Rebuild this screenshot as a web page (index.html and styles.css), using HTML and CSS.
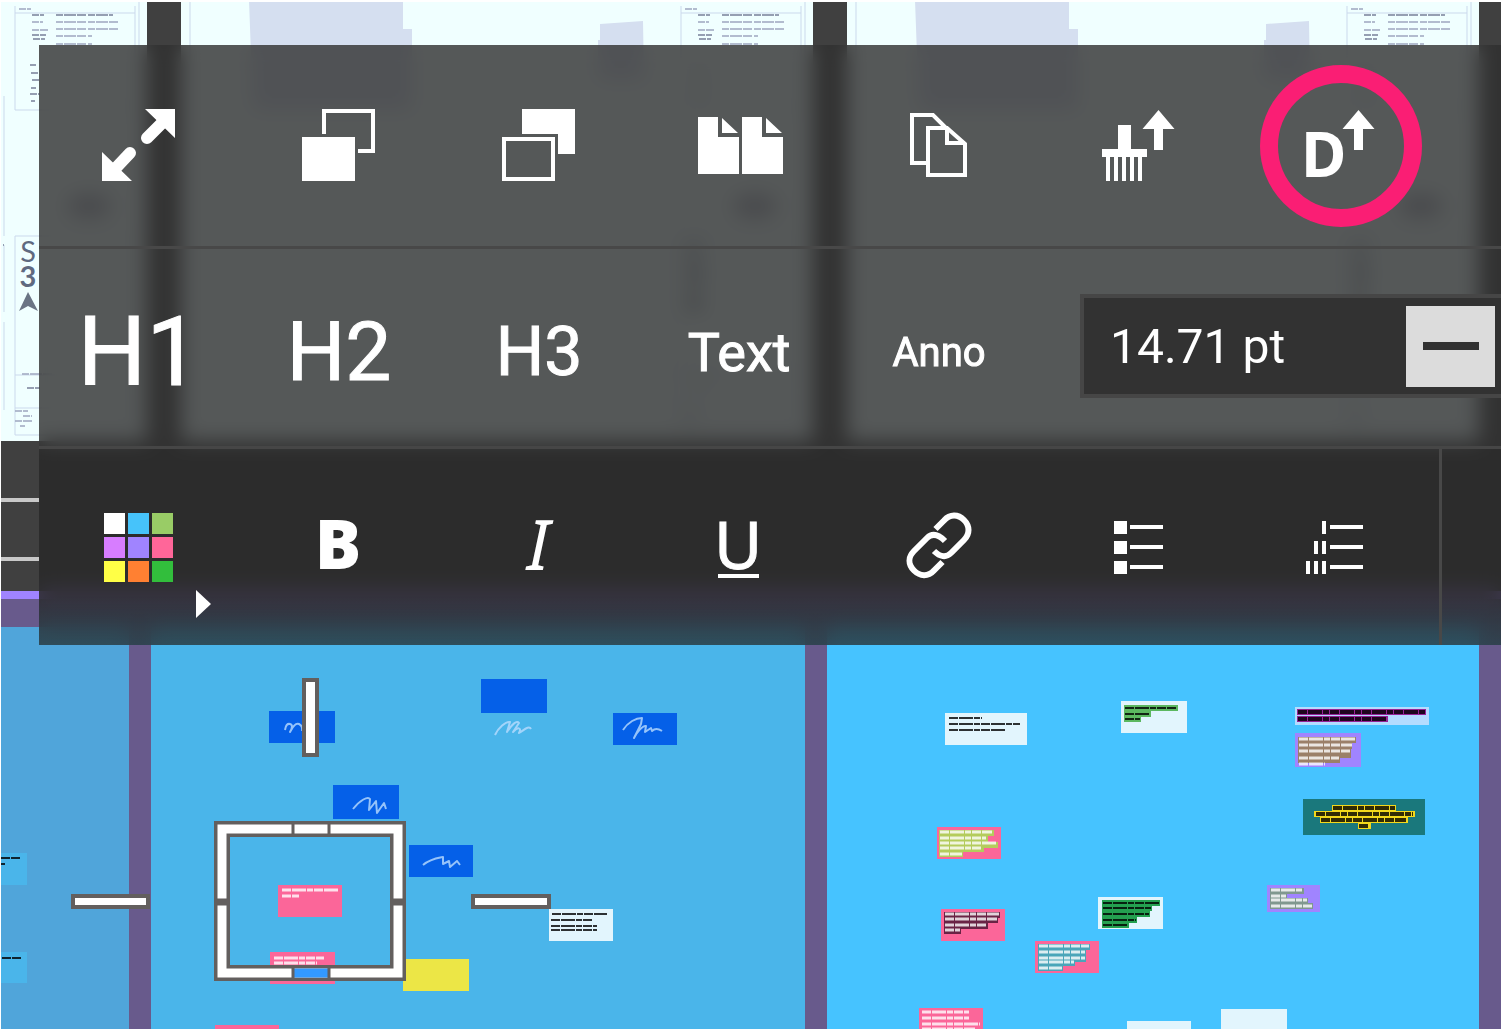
FILE: index.html
```
<!DOCTYPE html>
<html lang="en">
<head>
<meta charset="utf-8">
<meta name="viewport" content="width=device-width, initial-scale=1">
<title>Whiteboard</title>
<link rel="stylesheet" href="styles.css">
</head>
<body>
<main class="board">
  <svg class="canvas" aria-hidden="true">
    <!-- drawing sheets -->
    <rect class="backdrop" width="100%" height="592"/>
    <defs>
      <clipPath id="sheet-clip"><rect x="181" y="0" width="632" height="441"/></clipPath>
      <g id="sheet" clip-path="url(#sheet-clip)">
        <rect class="paper" x="181" y="0" width="632" height="441"/>
        <path class="plan" d="M249 0H403V29H412V110H253ZM600 24L643 21L644 80H598V40H600Z"/>
        <g class="rule">
          <path d="M190 0V441M805 0V441M681 6V110H801V6M681 13H801M681 435V236H801V435H681M681 375H801M681 408H801"/>
          <path d="M670 96V236M670 245V312M670 322V410"/>
        </g>
        <g class="print">
          <path d="M685 9H697M698 22H709M698 30H714M722 22H784M722 29H785M722 36H758M722 44H758M688 374H720M681 411H694M689 416H698M681 421H698M686 426H691"/>
          <path class="print-bold" d="M722 15H779M698 15H710M698 35H712M699 39H711M696 65H702M697 73H705M698 80H705M697 88H702M696 94H706M697 101H701M693 388H706M669 145H669M669 245H670"/>
        </g>
        <ellipse class="ink" cx="755" cy="206" rx="22" ry="12"/>
        <text class="mark" x="694" y="262">S</text>
        <text class="mark mark-bold" x="694" y="287">3</text>
        <path class="north" d="M694 292L704 311L694 306L685 311Z"/>
      </g>
    </defs>
    <use href="#sheet" x="-666"/>
    <use href="#sheet"/>
    <use href="#sheet" x="666"/>
    <rect class="guide" y="498" width="39" height="4"/>
    <rect class="guide" y="557" width="39" height="4"/>

    <!-- note panels -->
    <rect class="panel-edge" y="591" width="100%" height="8"/>
    <rect class="panel-gap" y="599" width="100%" height="100%"/>
    <rect class="panel-a" x="0" y="627" width="129" height="100%"/>
    <rect class="panel-b" x="151" y="627" width="654" height="100%"/>
    <rect class="panel-c" x="827" y="627" width="652" height="100%"/>

    <g class="panel-b">
      <rect x="0" y="853" width="27" height="32"/>
      <rect x="0" y="952" width="27" height="31"/>
    </g>
    <path class="greek" d="M1 858H20M1 864H5M2 958H21"/>

    <g class="note-blue">
      <rect x="269" y="711" width="66" height="32"/>
      <rect x="481" y="679" width="66" height="34"/>
      <rect x="613" y="713" width="64" height="32"/>
      <rect x="333" y="785" width="66" height="34"/>
      <rect x="409" y="845" width="64" height="32"/>
    </g>
    <g class="scribble">
      <path d="M285 730Q286 723 290 724T290 732Q295 722 299 724T302 731"/>
      <path d="M495 735C498 728 506 721 510 722L507 732C512 724 517 720 519 723L513 732C518 727 522 727 519 733C524 730 529 725 531 729"/>
      <path d="M623 730C628 722 636 718 642 718L641 724L634 738C637 732 643 725 646 726L645 732L651 728L652 731Q656 727 662 731"/>
      <path d="M353 809C360 800 368 796 370 799L369 810L376 801L377 813L384 803L386 809"/>
      <path d="M423 865C430 859 438 858 443 857L443 864L449 861L450 867L457 861L460 865"/>
    </g>
    <rect class="note-yellow" x="403" y="959" width="66" height="32"/>
    <g class="note-pink">
      <rect x="278" y="885" width="64" height="32"/>
      <rect x="270" y="952" width="65" height="32"/>
      <rect x="215" y="1025" width="64" height="32"/>
      <rect x="937" y="827" width="64" height="32"/>
      <rect x="941" y="909" width="64" height="32"/>
      <rect x="1035" y="941" width="64" height="32"/>
      <rect x="919" y="1008" width="64" height="32"/>
    </g>
    <g class="note-white">
      <rect x="549" y="909" width="64" height="32"/>
      <rect x="945" y="713" width="82" height="32"/>
      <rect x="1121" y="701" width="66" height="32"/>
      <rect x="1098" y="897" width="65" height="32"/>
      <rect x="1127" y="1021" width="64" height="32"/>
      <rect x="1221" y="1009" width="66" height="32"/>
    </g>
    <g class="note-violet">
      <rect x="1295" y="733" width="66" height="34"/>
      <rect x="1267" y="885" width="53" height="27"/>
    </g>
    <rect class="note-sky" x="1295" y="707" width="134" height="18"/>
    <rect class="note-teal" x="1303" y="799" width="122" height="36"/>

    <g class="highlight">
      <path stroke="#5cb860" d="M1124 708H1178M1124 714H1151M1124 719H1141"/>
      <path stroke="#962296" d="M1297 712H1426M1297 719H1388"/>
      <path stroke="#9b8068" d="M1298 740H1356M1298 746H1352M1298 752H1351M1298 755H1351M1298 760H1340"/>
      <path stroke="#f2d81c" d="M1332 808H1396M1314 814H1415M1320 820H1408M1358 826H1371"/>
      <path stroke="#b4cc5c" d="M939 833H994M939 839H988M939 845H998M939 849H984M939 854H963"/>
      <path stroke="#6a2345" d="M944 915H1000M944 920H998M944 926H988M944 931H961"/>
      <path stroke="#24a050" d="M1102 903H1160M1102 908H1152M1102 914H1150M1102 920H1137M1102 925H1129"/>
      <path stroke="#4aa5b9" d="M1038 947H1090M1038 953H1086M1038 959H1086M1038 963H1075M1038 968H1063"/>
      <path stroke="#80988f" d="M1270 891H1304M1270 896H1287M1270 901H1308M1270 906H1313"/>
    </g>
    <path class="greek" d="M552 914H607M551 920H593M551 926H597M551 930H597M949 718H982M949 724H1020M949 730H1005M1125 708H1176M1125 714H1150M1125 719H1140M1103 903H1159M1103 908H1151M1103 914H1149M1103 920H1136M1103 925H1128"/>
    <path class="greek greek-heavy" d="M1298 712H1425M1298 719H1387M1333 808H1395M1316 814H1413M1321 820H1406M1359 826H1369"/>
    <path class="greek greek-light" d="M282 890H339M282 896H299M274 958H324M274 963H317M1299 739H1355M1299 745H1352M1299 751H1350M1299 758H1339M1299 764H1325M940 832H992M940 838H986M940 843H996M940 848H982M940 854H962M945 914H999M945 919H997M945 925H987M945 930H960M1039 946H1089M1039 952H1085M1039 958H1085M1039 962H1074M1039 968H1062M1271 890H1303M1271 896H1286M1271 900H1307M1271 906H1312M922 1012H969M922 1018H969M922 1024H980M922 1029H975"/>

    <!-- selection frame -->
    <g class="frame-line">
      <rect x="304" y="680" width="13" height="75"/>
      <rect x="73" y="896" width="75" height="11"/>
      <rect x="473" y="896" width="76" height="11"/>
    </g>
    <rect class="frame-outer" x="222" y="829" width="176" height="144"/>
    <rect class="frame-inner" x="222" y="829" width="176" height="144"/>
    <path class="frame-accent" d="M293 973H329"/>
    <path class="frame-split" d="M293 824V835M329 824V835M293 968V979M329 968V979"/>
    <path class="frame-split frame-split-wide" d="M217 902H229M392 902H405"/>
    <path class="margin" d="M0 1H4000M0 0V4000"/>
  </svg>

  <section class="menu" aria-label="Formatting">
    <div class="row row-arrange">
      <button class="tool" aria-label="Expand">
        <svg class="icon" viewBox="0 0 100 100"><path d="M56 14H86V43ZM13 57V86H43Z"/><path class="round" d="M76 25L58 43M24 76L41 58"/></svg>
      </button>
      <button class="tool" aria-label="Bring to front">
        <svg class="icon" viewBox="0 0 100 100"><path d="M13 42H66V86H13Z"/><path class="line" d="M35 39V16H84V56H69"/></svg>
      </button>
      <button class="tool" aria-label="Send to back">
        <svg class="icon" viewBox="0 0 100 100"><path d="M33 14H86V59H69V39H33Z"/><path class="line" d="M15 44H64V84H15Z"/></svg>
      </button>
      <button class="tool" aria-label="Duplicate page">
        <svg class="icon" viewBox="0 0 100 100"><path d="M9 22H29V42H50V79H9ZM33 23V38H49ZM53 22H73V42H94V79H53ZM77 23V38H93Z"/></svg>
      </button>
      <button class="tool" aria-label="Copy">
        <svg class="icon" viewBox="0 0 100 100"><path class="line" d="M38 68H23V20H44L57 33M39 33H58L76 49V80H39ZM58 33V48H76"/></svg>
      </button>
      <button class="tool" aria-label="Pick up format">
        <svg class="icon" viewBox="0 0 100 100"><path d="M29 30H42V54H58V62H13V54H29ZM17 62H21V86H17ZM25 62H29V86H25ZM33 62H37V86H33ZM41 62H45V86H41ZM49 62H53V86H49ZM69.500 15L85.500 34H74V55H65V34H53.500Z"/></svg>
      </button>
      <button class="tool tool-ringed" aria-label="Set as default">
        <svg class="icon" viewBox="0 0 100 100"><text class="glyph glyph-default" x="12" y="82">D</text><path d="M69.500 15L85.500 34H74V55H65V34H53.500Z"/></svg>
      </button>
    </div>
    <div class="row row-text">
      <button class="tool text-h1">H1</button>
      <button class="tool text-h2">H2</button>
      <button class="tool text-h3">H3</button>
      <button class="tool text-body">Text</button>
      <button class="tool text-anno">Anno</button>
      <div class="stepper">
        <input class="stepper-value" type="text" value="14.71 pt" aria-label="Font size">
        <button class="stepper-minus" aria-label="Decrease font size"><span class="dash"></span></button>
      </div>
    </div>
    <div class="row row-format">
      <button class="tool" aria-label="Colors">
        <svg class="icon" viewBox="0 0 100 100">
          <rect fill="#ffffff" x="15" y="16" width="21" height="21"/><rect fill="#46c3fa" x="39" y="16" width="21" height="21"/><rect fill="#99cc66" x="63" y="16" width="21" height="21"/>
          <rect fill="#d77dff" x="15" y="40" width="21" height="21"/><rect fill="#a084ff" x="39" y="40" width="21" height="21"/><rect fill="#ff6699" x="63" y="40" width="21" height="21"/>
          <rect fill="#ffff46" x="15" y="64" width="21" height="21"/><rect fill="#ff8032" x="39" y="64" width="21" height="21"/><rect fill="#32be3c" x="63" y="64" width="21" height="21"/>
          <path d="M107 93L122 107L107 121Z"/>
        </svg>
      </button>
      <button class="tool" aria-label="Bold">
        <svg class="icon" viewBox="0 0 100 100"><text class="glyph glyph-bold" x="49" y="72">B</text></svg>
      </button>
      <button class="tool" aria-label="Italic">
        <svg class="icon" viewBox="0 0 100 100"><text class="glyph glyph-italic" x="49" y="73">I</text></svg>
      </button>
      <button class="tool" aria-label="Underline">
        <svg class="icon" viewBox="0 0 100 100"><text class="glyph glyph-underline" x="49" y="72">U</text><path d="M29 77H70V81H29Z"/></svg>
      </button>
      <button class="tool" aria-label="Link">
        <svg class="icon" viewBox="0 0 100 100"><path class="chain" d="M46.500 32L55 23.500C61 17 69 17 75 23C81 29 81 37 75 43L62 56C57 61 51 60 45 54M53.500 65L45 73.500C39 80 31 79.500 25 73.500C19 67.500 19 60 25 54L38 41C43 36 49 37 56 44"/></svg>
      </button>
      <button class="tool" aria-label="Bulleted list">
        <svg class="icon" viewBox="0 0 100 100"><path d="M25 24H38V37H25ZM25 44H38V57H25ZM25 64H38V77H25ZM41 28H74V32H41ZM41 48H74V52H41ZM41 68H74V72H41Z"/></svg>
      </button>
      <button class="tool" aria-label="Numbered list">
        <svg class="icon" viewBox="0 0 100 100"><path d="M33 24H37V37H33ZM33 44H37V57H33ZM33 64H37V77H33ZM25 44H29V57H25ZM25 64H29V77H25ZM17 64H21V77H17ZM41 28H74V32H41ZM41 48H74V52H41ZM41 68H74V72H41Z"/></svg>
      </button>
      <div class="more"></div>
    </div>
  </section>
</main>
</body>
</html>
```
FILE: styles.css
```
*, *::before, *::after { box-sizing: border-box; }

body {
  margin: 0;
  background: #fff;
  font-family: Roboto, "Liberation Sans", sans-serif;
  color: #fff;
}

.board {
  position: relative;
  min-height: 100vh;
  padding: 45px 0 0 39px;
  overflow: hidden;
}

/* canvas */
.canvas {
  position: absolute;
  inset: 0;
  width: 100%;
  height: 100%;
}
.backdrop { fill: #404040; }
.paper { fill: #f0ffff; }
.plan { fill: #d5dff0; }
.rule { fill: none; stroke: #cbd9ec; stroke-width: 1; }
.print { fill: none; stroke: #a3acc4; stroke-width: 2; stroke-dasharray: 7 1 12 1 9 2; opacity: 0.8; }
.print-bold { stroke: #7f88a0; }
.ink { fill: #b0b6c4; }
.mark { font: 400 29px Lato, sans-serif; fill: #5f6a80; text-anchor: middle; }
.mark-bold { font-weight: 700; }
.north { fill: #6a7484; }
.guide { fill: #c8c8c8; }
.panel-edge { fill: #a084ff; }
.panel-gap { fill: #685a8c; }
.panel-a { fill: #50a5da; }
.panel-b { fill: #4ab5ea; }
.panel-c { fill: #46c3ff; }
.note-blue { fill: #0560e8; }
.note-yellow { fill: #ece646; }
.note-pink { fill: #fb6699; }
.note-white { fill: #e2f5fd; }
.note-violet { fill: #a084ff; }
.note-sky { fill: #b4dcff; }
.note-teal { fill: #1a787c; }
.highlight { fill: none; stroke-width: 6; }
.greek { fill: none; stroke: #000; stroke-width: 2; stroke-dasharray: 9 1 14 1 6 1; opacity: 0.8; }
.greek-heavy { stroke-width: 4; }
.greek-light { stroke: #fff; stroke-width: 3; }
.scribble { fill: none; stroke: #b9dcff; stroke-width: 2; stroke-linejoin: round; opacity: 0.8; }
.frame-line { fill: #fff; stroke: #635f5e; stroke-width: 4; }
.frame-outer { fill: none; stroke: #635f5e; stroke-width: 16; }
.frame-inner { fill: none; stroke: #fff; stroke-width: 9; }
.frame-accent { stroke: #3399ff; stroke-width: 9; }
.frame-split { stroke: #635f5e; stroke-width: 3; }
.frame-split-wide { stroke-width: 7; }
.margin { fill: none; stroke: #fff; stroke-width: 2; }

/* floating menu */
.menu {
  position: relative;
  background: rgba(46, 46, 46, 0.8);
  backdrop-filter: blur(10px);
  overflow: hidden;
}
.row { display: flex; align-items: flex-start; }
.row-arrange { height: 204px; border-bottom: 3px solid #484848; }
.row-text { height: 200px; border-bottom: 3px solid #464646; }
.row-format {
  height: 196px;
  background: linear-gradient(rgba(0, 0, 0, 0.12) 75%, rgba(38, 84, 104, 0.4));
}

.tool {
  display: flex;
  flex: 0 0 200px;
  align-items: center;
  justify-content: center;
  height: 200px;
  padding: 0;
  border: 0;
  background: none;
  color: inherit;
  font-family: inherit;
}
.row-format .tool { height: 196px; }
.icon { width: 100px; height: 100px; fill: #fff; overflow: visible; }
.line { fill: none; stroke: #fff; stroke-width: 4; }
.round { fill: none; stroke: #fff; stroke-width: 12; stroke-linecap: round; }
.chain { fill: none; stroke: #fff; stroke-width: 6; }

.tool-ringed { position: relative; }
.tool-ringed::after {
  content: "";
  position: absolute;
  top: 20px;
  left: 21px;
  width: 162px;
  height: 162px;
  border: 18px solid #fa1e74;
  border-radius: 50%;
}

.glyph { font-family: "Noto Sans", sans-serif; }
.glyph-default { font-size: 62px; font-weight: 700; }
.glyph-bold { font-family: "Open Sans", sans-serif; font-size: 69px; font-weight: 800; text-anchor: middle; }
.glyph-italic { font-size: 70px; font-style: italic; text-anchor: middle; }
.glyph-underline { font-size: 66px; stroke: #fff; stroke-width: 1; text-anchor: middle; }

.row-text .tool { padding-top: 6px; -webkit-text-stroke: 1px #fff; }
.text-h1 { font-size: 96px; }
.text-h2 { font-size: 82px; }
.text-h3 { font-size: 68px; }
.text-body { font-size: 54px; }
.text-anno { font-size: 40px; }

.stepper {
  display: flex;
  flex: 1;
  align-items: center;
  min-width: 0;
  height: 104px;
  margin: 45px -4px 0 41px;
  padding-right: 6px;
  border: 4px solid #464646;
  background: #323232;
}
.stepper-value {
  flex: 1;
  min-width: 0;
  padding: 0 0 0 26px;
  border: 0;
  background: none;
  color: inherit;
  font: 48px Roboto, sans-serif;
}
.stepper-minus {
  display: flex;
  flex: none;
  align-items: center;
  justify-content: center;
  width: 89px;
  height: 81px;
  padding: 0;
  border: 0;
  background: #dcdcdc;
}
.dash { width: 56px; height: 8px; background: #323232; }
.more { flex: 1; height: 196px; border-left: 3px solid #484848; }
```
